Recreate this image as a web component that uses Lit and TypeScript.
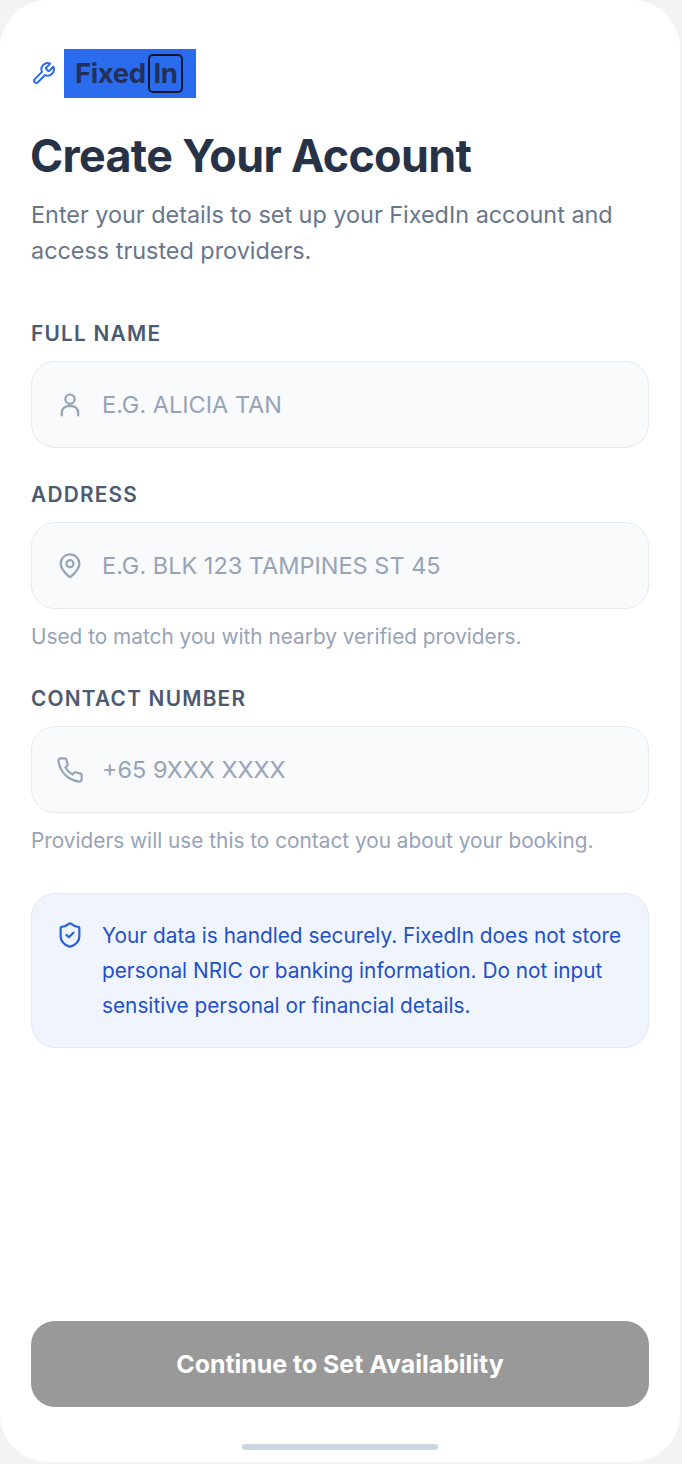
// app.ts
// Create account screen

import { LitElement, html, css, svg } from "lit";
import { customElement } from "lit/decorators.js";

const ICONS = {
  user: svg`<circle cx="12" cy="7" r="4"/><path d="M5 21v-2.5a5.5 5.5 0 0 1 5.5-5.5h3a5.5 5.5 0 0 1 5.5 5.5V21"/>`,
  pin: svg`<path d="M20 10c0 5-5.5 9.5-7.4 11.2a1 1 0 0 1-1.2 0C9.5 19.5 4 15 4 10a8 8 0 0 1 16 0"/><circle cx="12" cy="10" r="3"/>`,
  phone: svg`<path d="M22 16.92v3a2 2 0 0 1-2.18 2 19.8 19.8 0 0 1-8.63-3.07 19.5 19.5 0 0 1-6-6 19.8 19.8 0 0 1-3.07-8.67A2 2 0 0 1 4.11 2h3a2 2 0 0 1 2 1.72c.13.96.36 1.9.7 2.81a2 2 0 0 1-.45 2.11L8.09 9.91a16 16 0 0 0 6 6l1.27-1.27a2 2 0 0 1 2.11-.45c.91.34 1.85.57 2.81.7A2 2 0 0 1 22 16.92z"/>`,
};

@customElement("app-root")
export class AppRoot extends LitElement {
  static styles = css`
    :host {
      display: block;
      height: 1464px;
      background: #f3f3f4;
      font-family: Inter, "Liberation Sans", sans-serif;
      overflow: hidden;
    }

    .screen {
      box-sizing: border-box;
      width: 680px;
      height: 1462px;
      padding: 49px 31px 0;
      display: flex;
      flex-direction: column;
      background: #fff;
      border-radius: 48px;
    }

    .brand {
      display: flex;
      align-items: center;
      gap: 8px;
      height: 49px;
    }

    .brand svg {
      width: 25px;
      height: 25px;
      fill: none;
      stroke: #2b6cee;
      stroke-width: 1.9;
      stroke-linecap: round;
      stroke-linejoin: round;
    }

    .logo {
      display: flex;
      align-items: center;
      width: 132px;
      height: 49px;
      box-sizing: border-box;
      padding: 0 13px 0 11px;
      background: #2b6cee;
      color: #22305a;
      font-size: 27.5px;
      font-weight: 700;
      letter-spacing: -0.4px;
    }

    .logo .word {
      margin-bottom: 2px;
    }

    .logo .in {
      display: flex;
      align-items: center;
      justify-content: center;
      box-sizing: border-box;
      width: 35px;
      height: 39px;
      padding-bottom: 2px;
      margin-left: auto;
      border: 2px solid #0f172a;
      border-radius: 5px;
    }

    h1 {
      margin: 31px 0 0 -1px;
      font-size: 44.8px;
      line-height: 54px;
      font-weight: 700;
      letter-spacing: -0.65px;
      color: #273247;
    }

    .lead {
      margin: 14px 0 0;
      font-size: 23.4px;
      line-height: 36px;
      color: #68768c;
    }

    .field-label {
      margin: 0;
      font-size: 20.8px;
      line-height: 28px;
      font-weight: 600;
      letter-spacing: 1.25px;
      color: #4b5a70;
    }

    .fields {
      display: flex;
      flex-direction: column;
      margin-top: 51px;
    }

    .field {
      display: flex;
      flex-direction: column;
      gap: 13px;
    }

    .field + .field {
      margin-top: 33px;
    }

    .field.hinted + .field {
      margin-top: 34px;
    }

    .input {
      display: flex;
      align-items: center;
      gap: 18px;
      box-sizing: border-box;
      height: 87px;
      padding: 0 24px;
      background: #f8fafc;
      border: 1px solid #e7eaef;
      border-radius: 24px;
      font-size: 23.5px;
      color: #97a3b6;
    }

    .input svg {
      flex: none;
      width: 28px;
      height: 28px;
      fill: none;
      stroke: #97a3b6;
      stroke-width: 1.9;
      stroke-linecap: round;
      stroke-linejoin: round;
    }

    .hint {
      margin: 1px 0 0;
      font-size: 20.8px;
      line-height: 28px;
      color: #97a3b6;
    }

    .notice {
      display: flex;
      gap: 18px;
      box-sizing: border-box;
      height: 155px;
      margin-top: 38px;
      padding: 24px 24px;
      background: #f0f5fd;
      border: 1px solid #e0e9f6;
      border-radius: 24px;
      font-size: 20.8px;
      line-height: 35px;
      color: #1f50c8;
    }

    .notice svg {
      flex: none;
      width: 28px;
      height: 28px;
      margin-top: 3px;
      fill: none;
      stroke: #2b62d9;
      stroke-width: 1.9;
      stroke-linecap: round;
      stroke-linejoin: round;
    }

    .continue {
      display: flex;
      align-items: center;
      justify-content: center;
      height: 86px;
      margin-top: auto;
      border: 0;
      border-radius: 24px;
      background: #999;
      color: #fff;
      font: 700 24.9px Inter, "Liberation Sans", sans-serif;
    }

    .home-bar {
      align-self: center;
      width: 196px;
      height: 6px;
      margin: 37px 0 12px;
      border-radius: 3px;
      background: #cdd5e1;
    }
  `;

  private renderField(label: string, icon: unknown, placeholder: string, hint = "") {
    return html`
      <div class="field ${hint ? "hinted" : ""}">
        <p class="field-label">${label}</p>
        <div class="input">
          <svg viewBox="0 0 24 24">${icon}</svg>
          <span>${placeholder}</span>
        </div>
        ${hint ? html`<p class="hint">${hint}</p>` : ""}
      </div>
    `;
  }

  protected render() {
    return html`
      <div class="screen">
        <div class="brand">
          <svg viewBox="0 0 24 24">
            <path d="M14.7 6.3a1 1 0 0 0 0 1.4l1.6 1.6a1 1 0 0 0 1.4 0l3.77-3.77a6 6 0 0 1-7.94 7.94l-6.91 6.91a2.12 2.12 0 0 1-3-3l6.91-6.91a6 6 0 0 1 7.94-7.94l-3.76 3.76z"/>
          </svg>
          <div class="logo"><span class="word">Fixed</span><span class="in">In</span></div>
        </div>
        <h1>Create Your Account</h1>
        <p class="lead">Enter your details to set up your FixedIn account and access trusted providers.</p>
        <div class="fields">
          ${this.renderField("FULL NAME", ICONS.user, "E.G. ALICIA TAN")}
          ${this.renderField("ADDRESS", ICONS.pin, "E.G. BLK 123 TAMPINES ST 45", "Used to match you with nearby verified providers.")}
          ${this.renderField("CONTACT NUMBER", ICONS.phone, "+65 9XXX XXXX", "Providers will use this to contact you about your booking.")}
        </div>
        <div class="notice">
          <svg viewBox="0 0 24 24">
            <path d="M20 13c0 5-3.5 7.5-7.66 8.95a1 1 0 0 1-.67-.01C7.5 20.5 4 18 4 13V6a1 1 0 0 1 1-1c2 0 4.5-1.2 6.24-2.72a1.17 1.17 0 0 1 1.52 0C14.51 3.81 17 5 19 5a1 1 0 0 1 1 1z"/>
            <path d="m9 12 2 2 4-4"/>
          </svg>
          <span>Your data is handled securely. FixedIn does not store personal NRIC or banking information. Do not input sensitive personal or financial details.</span>
        </div>
        <button class="continue">Continue to Set Availability</button>
        <div class="home-bar"></div>
      </div>
    `;
  }
}
